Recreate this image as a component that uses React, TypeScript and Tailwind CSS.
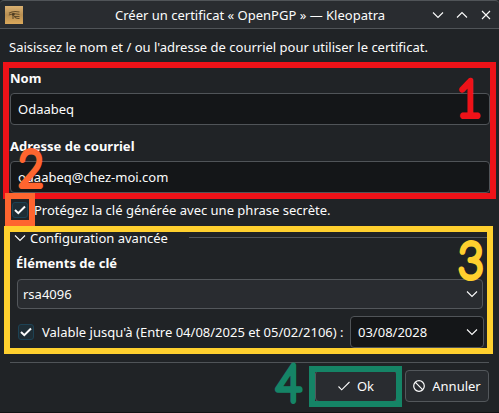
import type { ReactNode } from "react";

function Chevron({ up = false, className = "" }: { up?: boolean; className?: string }) {
  return (
    <svg width="12" height="8" viewBox="0 0 12 8" fill="none" stroke="#fcfcfc" strokeWidth="1.1" className={className}>
      <path d={up ? "M1 6.5 L6 1.5 L11 6.5" : "M1 1.5 L6 6.5 L11 1.5"} />
    </svg>
  );
}

function EyeOfHorus() {
  return (
    <svg width="18" height="18" viewBox="0 0 18 18">
      <defs>
        <linearGradient id="papyrus" x1="0" y1="0" x2="0" y2="1">
          <stop offset="0" stopColor="#d9b071" />
          <stop offset="0.5" stopColor="#b98f52" />
          <stop offset="1" stopColor="#dba95b" />
        </linearGradient>
      </defs>
      <rect width="18" height="18" fill="url(#papyrus)" />
      <g fill="none" stroke="#604b2a">
        <path d="M4 7.2 Q8 4.6 14.5 6" strokeWidth="1.2" />
        <path d="M3.8 9 Q8.5 6.6 14.5 8.4 M9 10.5 H14.5" strokeWidth="1" />
        <path d="M8 9 V13 M9.5 10.8 Q11 13 14.5 12.4" strokeWidth="1.1" />
      </g>
      <circle cx="8.3" cy="8.4" r="1.4" fill="#4d3b20" />
    </svg>
  );
}

function Checkbox() {
  return (
    <span className="flex size-4 shrink-0 items-center justify-center rounded-[3px] border border-[#1d4254] bg-[#1e2d35]">
      <svg width="12" height="10" viewBox="0 0 12 10" fill="none" stroke="#fcfcfc" strokeWidth="2">
        <path d="M1 5 L4.3 8.2 L11 1.5" />
      </svg>
    </span>
  );
}

function Field({ value }: { value: string }) {
  return (
    <div className="flex h-8 items-center rounded-[4px] border border-[#505458] bg-[#141618] pl-[7px]">{value}</div>
  );
}

function Button({ icon, children, className }: { icon: ReactNode; children: ReactNode; className: string }) {
  return (
    <button className={`flex h-8 items-center justify-center rounded-[4px] border border-[#53575b] bg-[#292c30] ${className}`}>
      {icon}
      {children}
    </button>
  );
}

function Digit({ value, className }: { value: string; className: string }) {
  return (
    <svg width="32" height="46" viewBox="0 0 32 46" className={`pointer-events-none absolute overflow-visible ${className}`}>
      <text
        x="16"
        y="40.5"
        textAnchor="middle"
        fill="currentColor"
        stroke="currentColor"
        strokeWidth="5.8"
        strokeLinejoin="round"
        className="font-['Lato',sans-serif] text-[49px] font-thin"
        transform="translate(16 0) scale(0.89 1) translate(-16 0)"
      >
        {value}
      </text>
    </svg>
  );
}

export default function App() {
  return (
    <div className="relative flex h-[413px] w-[499px] flex-col overflow-hidden border-b border-[#111315] bg-[#202326] font-['Noto_Sans',sans-serif] text-[13px] leading-[18px] whitespace-nowrap text-[#fcfcfc]">
      <header className="flex h-[29px] shrink-0 items-center rounded-t-[4px] border-t border-b border-[#505458] bg-[#292c30]">
        <div className="ml-[5px] w-[110px]"><EyeOfHorus /></div>
        <h1 className="w-[270px]">Créer un certificat « OpenPGP » — Kleopatra</h1>
        <div className="ml-[47px] flex items-center gap-3">
          <Chevron />
          <Chevron up />
          <svg width="10" height="10" viewBox="0 0 10 10" stroke="#fcfcfc" strokeWidth="1.1" className="ml-px">
            <path d="M1 1 L9 9 M9 1 L1 9" />
          </svg>
        </div>
      </header>

      <main className="px-[9px]">
        <p className="mt-[9px]">Saisissez le nom et / ou l'adresse de courriel pour utiliser le certificat.</p>
        <label className="mt-[13px] mb-[6px] block pl-px font-bold">Nom</label>
        <div className="ml-px"><Field value="Odaabeq" /></div>
        <label className="mt-[12px] mb-[6px] block pl-px font-bold">Adresse de courriel</label>
        <div className="ml-px"><Field value="odaabeq@chez-moi.com" /></div>

        <div className="mt-[8px] flex h-[18px] items-center gap-[6px] pl-[3px]">
          <Checkbox />
          <span>Protégez la clé générée avec une phrase secrète.</span>
        </div>

        <div className="mt-[10px] flex h-[18px] items-center pl-[5px]">
          <Chevron className="mr-[4px]" />
          <span className="w-[159px]">Configuration avancée</span>
          <span className="mb-px h-px flex-1 bg-[#505458]" />
        </div>

        <section className="pr-[7px] pl-[8px]">
          <label className="mt-[7px] mb-[7px] -ml-px block font-bold">Éléments de clé</label>
          <div className="flex h-[30px] items-center justify-between rounded-[4px] border border-[#53575b] bg-[#292c30] pr-[4px] pl-[5px]">
            rsa4096
            <Chevron />
          </div>
          <div className="-mr-[2px] mt-[7px] flex h-8 items-center pl-px">
            <Checkbox />
            <span className="w-[316px] pl-[8px]">Valable jusqu'à (Entre 04/08/2025 et 05/02/2106) :</span>
            <div className="flex h-8 w-[134px] items-center justify-between rounded-[4px] border border-[#505458] bg-[#141618] pr-[5px] pl-[7px]">
              03/08/2028
              <Chevron />
            </div>
          </div>
        </section>
      </main>

      <footer className="mx-[10px] mt-[14px] flex justify-end gap-[8px] border-t border-[#505458] pt-[7px]">
        <Button
          className="w-[82px] gap-[7px]"
          icon={
            <svg width="12" height="10" viewBox="0 0 12 10" fill="none" stroke="#fcfcfc" strokeWidth="1.1">
              <path d="M0.5 5.5 L3.7 8.8 L11.5 1" />
            </svg>
          }
        >
          Ok
        </Button>
        <Button
          className="w-[84px] gap-[7px]"
          icon={
            <svg width="12" height="12" viewBox="0 0 12 12" fill="none" stroke="#fcfcfc" strokeWidth="1.2">
              <circle cx="6" cy="6" r="5.3" />
              <path d="M2.2 2.2 L9.8 9.8" />
            </svg>
          }
        >
          Annuler
        </Button>
      </footer>

      <div className="absolute top-[62px] left-[3px] h-[137px] w-[493px] border-6 border-[#ee1218]" />
      <div className="absolute top-[193px] left-[5px] h-[33px] w-[30px] border-6 border-[#ff652f]" />
      <div className="absolute top-[226px] left-[4px] h-[128px] w-[489px] border-6 border-[#ffd02e]" />
      <div className="absolute top-[366px] left-[309px] h-[41px] w-[93px] border-6 border-[#158466]" />
      <Digit value="1" className="top-[75px] left-[453px] text-[#ee1218]" />
      <Digit value="2" className="top-[145px] left-[15px] text-[#ff652f]" />
      <Digit value="3" className="top-[237px] left-[455px] text-[#ffd02e]" />
      <Digit value="4" className="top-[360px] left-[273px] text-[#158466]" />
    </div>
  );
}
